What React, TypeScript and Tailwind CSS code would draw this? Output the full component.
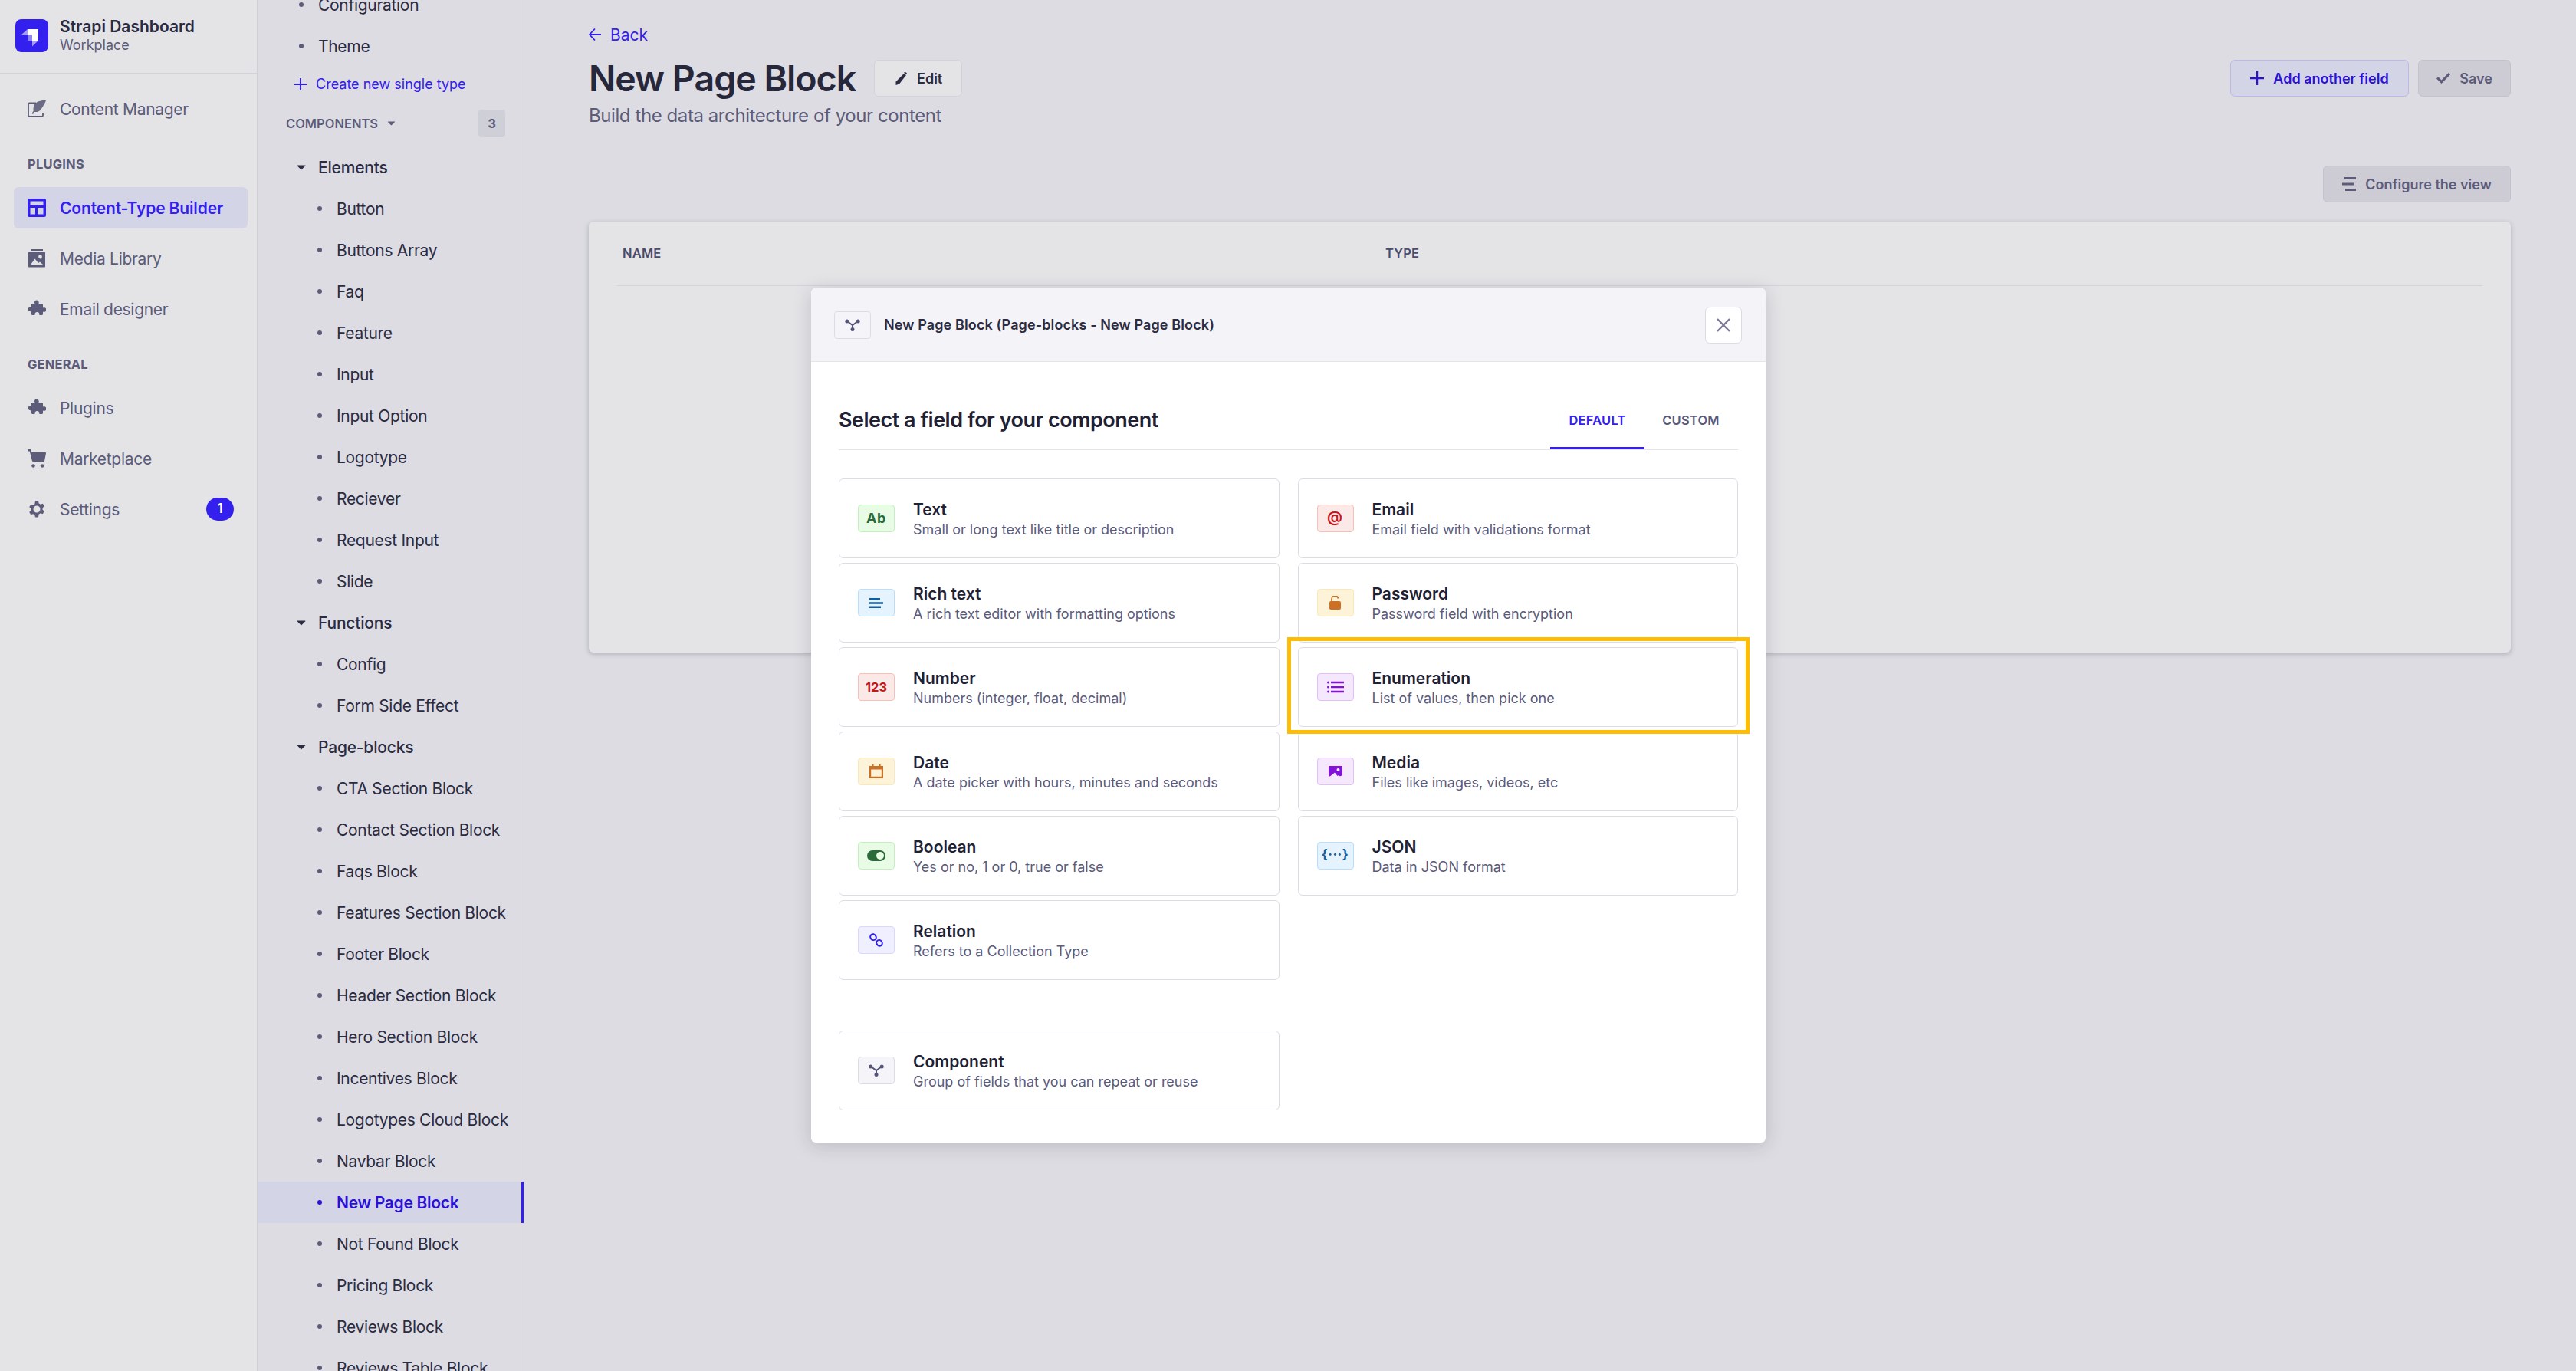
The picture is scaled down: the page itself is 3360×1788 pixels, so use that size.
import type { ReactNode } from 'react';

const FONT = { fontFamily: 'Inter, "Liberation Sans", sans-serif' };

const BLUE = '#3420ee';

function Puzzle({ className = '' }: { className?: string }) {
  return (
    <svg viewBox="0 0 24 24" className={className} fill="currentColor">
      <path d="M9 2.500a3 3 0 0 1 5.800.9c0 .7-.3 1.300-.6 1.800h4.600c.7 0 1.200.5 1.200 1.200v4a3 3 0 1 1 0 5.200v3.200c0 .7-.5 1.200-1.200 1.200h-3.600a3 3 0 1 0-5.600 0H6.200c-.7 0-1.200-.5-1.200-1.200v-3.900a3 3 0 1 1 0-5.400V6.400c0-.7.5-1.200 1.200-1.200h3.400c-.4-.7-.7-1.600-.6-2.700Z" />
    </svg>
  );
}

function NavIcon({ name }: { name: string }) {
  const cls = 'w-6 h-6 shrink-0';
  switch (name) {
    case 'feather':
      return (
        <svg viewBox="0 0 24 24" className={cls} fill="none">
          <path d="M11 4.500H2.500a1.500 1.500 0 0 0-1.500 1.500v14.500a1.500 1.500 0 0 0 1.500 1.500h16a1.500 1.500 0 0 0 1.500-1.500V17" stroke="currentColor" strokeWidth="1.800" />
          <path d="M24 1c-7-.5-13.500 1.500-15.500 6.500-1 2.600-1.200 5-.8 7l-2.200 3.500 1.500 1 2-3c3 .5 6.500-.5 8.500-3.500 2.500-3.500 4.500-6.500 6.500-11.500Z" fill="currentColor" opacity="0.9" />
        </svg>
      );
    case 'layout':
      return (
        <svg viewBox="0 0 24 24" className={cls} fill="currentColor">
          <path fillRule="evenodd" d="M0 2c0-1.100.9-2 2-2h20c1.100 0 2 .9 2 2v20c0 1.100-.9 2-2 2H2c-1.100 0-2-.9-2-2V2Zm3.500 1.500V8.500h17v-5h-17Zm0 8.500v8.500h6.500V12H3.500Zm9.500 0v8.500h7.500V12H13Z" />
        </svg>
      );
    case 'media':
      return (
        <svg viewBox="0 0 24 24" className={cls} fill="currentColor">
          <path d="M4 0h16v2H4zM2 3.500h20c.6 0 1 .4 1 1v18c0 .6-.4 1-1 1H2c-.6 0-1-.4-1-1v-18c0-.6.4-1 1-1Z" />
          <circle cx="16.500" cy="10" r="2.400" fill="#e4e4e7" />
          <path d="M4 20 9.500 12.500l4.500 5.500 2-1.500 4 3.500v.5H4Z" fill="#e4e4e7" />
        </svg>
      );
    case 'puzzle':
      return <Puzzle className={cls} />;
    case 'cart':
      return (
        <svg viewBox="0 0 24 24" className={cls} fill="currentColor">
          <path d="M0 0h3.500c.6 0 1 .4 1.200 1l.7 3H23c.7 0 1.100.6 1 1.200l-2 10c-.1.500-.5.800-1 .8H7c-.5 0-1-.4-1.100-.9L2.700 2.500H0V0Z" />
          <circle cx="7.500" cy="21.500" r="2.300" />
          <circle cx="19" cy="21.500" r="2.300" />
        </svg>
      );
    default:
      return (
        <svg viewBox="0 0 24 24" className={cls} fill="currentColor">
          <path fillRule="evenodd" d="M10 .5h4l.7 3.100c.8.300 1.500.6 2.100 1.100l3-1 2 3.500-2.300 2.100a8 8 0 0 1 0 2.400l2.300 2.100-2 3.500-3-1c-.6.500-1.300.8-2.100 1.100L14 21.500h-4l-.7-3.100c-.8-.3-1.500-.6-2.100-1.100l-3 1-2-3.500 2.300-2.100a8 8 0 0 1 0-2.400L2.200 8.200l2-3.500 3 1c.6-.5 1.300-.8 2.100-1.100L10 .5ZM12 15.500a4.500 4.500 0 1 0 0-9 4.500 4.500 0 0 0 0 9Z" transform="translate(0 1)" />
        </svg>
      );
  }
}

function NavItem({ icon, label, active, badge }: { icon: string; label: string; active?: boolean; badge?: string }) {
  return (
    <div
      className={[
        'h-[54px] flex items-center pl-[18px] pr-[18px] gap-[18px] rounded-md',
        active ? 'bg-[#d4d4e7] text-[#3420ee] font-semibold' : 'text-[#5c5c7a]',
      ].join(' ')}
    >
      <NavIcon name={icon} />
      <span className={['text-[21px] leading-none flex-1 whitespace-nowrap', active ? 'tracking-[-0.15px]' : 'tracking-[-0.3px]'].join(' ')}>{label}</span>
      {badge && (
        <span className="w-9 h-[30px] rounded-full bg-[#3420ee] text-white text-[17px] font-semibold flex items-center justify-center">
          {badge}
        </span>
      )}
    </div>
  );
}

function Caret({ className = '' }: { className?: string }) {
  return (
    <svg viewBox="0 0 12 7" className={className} fill="currentColor">
      <path d="M1 .5h10c.4 0 .6.500.3.800L6.300 6.200c-.2.200-.5.200-.7 0L.7 1.300C.4 1 .6.500 1 .5Z" />
    </svg>
  );
}

function Leaf({ label, active }: { label: string; active?: boolean }) {
  return (
    <div
      className={[
        'h-[54px] flex items-center pl-[78px]',
        active ? 'bg-[#d4d4e7] text-[#2a10d8] font-semibold border-r-[3px] border-[#3420ee]' : 'text-[#2b2b42]',
      ].join(' ')}
    >
      <span className={['w-[6px] h-[6px] rounded-full mr-[19px] shrink-0', active ? 'bg-[#2a10d8]' : 'bg-[#5c5c7a]'].join(' ')} />
      <span className={['text-[21px] leading-none whitespace-nowrap', active ? 'tracking-[-0.3px]' : 'tracking-[-0.3px]'].join(' ')}>{label}</span>
    </div>
  );
}

function Group({ label }: { label: string }) {
  return (
    <div className="h-[54px] flex items-center pl-[51px] text-[#2b2b42]">
      <Caret className="w-3 h-[7px] mr-[16px] shrink-0" />
      <span className="text-[21px] leading-none font-medium tracking-[-0.2px]">{label}</span>
    </div>
  );
}

const ELEMENTS = ['Button', 'Buttons Array', 'Faq', 'Feature', 'Input', 'Input Option', 'Logotype', 'Reciever', 'Request Input', 'Slide'];
const FUNCTIONS = ['Config', 'Form Side Effect'];
const PAGE_BLOCKS = [
  'CTA Section Block',
  'Contact Section Block',
  'Faqs Block',
  'Features Section Block',
  'Footer Block',
  'Header Section Block',
  'Hero Section Block',
  'Incentives Block',
  'Logotypes Cloud Block',
  'Navbar Block',
  'New Page Block',
  'Not Found Block',
  'Pricing Block',
  'Reviews Block',
  'Reviews Table Block',
];

function ComponentIcon() {
  return (
    <svg viewBox="0 0 20 16" className="w-5 h-4" fill="none" stroke="currentColor" strokeWidth="2">
      <path d="M3 3 10 8l7-5M10 8v6" />
      <circle cx="2.800" cy="3" r="2.500" fill="currentColor" stroke="none" />
      <circle cx="17.200" cy="3" r="2.500" fill="currentColor" stroke="none" />
      <circle cx="10" cy="13.500" r="2.500" fill="currentColor" stroke="none" />
    </svg>
  );
}

type Tone = 'green' | 'blue' | 'red' | 'yellow' | 'purple' | 'indigo' | 'neutral';

const TONE_CLASS: Record<Tone, string> = {
  green: 'bg-[#e8fbe5] border-[#c4f0bf] text-[#2a6b39]',
  blue: 'bg-[#e5f3ff] border-[#b5dfff] text-[#125f9f]',
  red: 'bg-[#fbe9e7] border-[#f6bfb8] text-[#c81418]',
  yellow: 'bg-[#fdf3d9] border-[#fae8b8] text-[#cc7026]',
  purple: 'bg-[#f5e8fd] border-[#e2bff5] text-[#8312d8]',
  indigo: 'bg-[#efefff] border-[#d9d8ff] text-[#2f1eee]',
  neutral: 'bg-[#f5f5f9] border-[#dcdce4] text-[#55557a]',
};

function Tile({ tone, children }: { tone: Tone; children: ReactNode }) {
  return (
    <div className={['w-12 h-9 shrink-0 rounded-[4px] border-[1.5px] flex items-center justify-center', TONE_CLASS[tone]].join(' ')}>
      {children}
    </div>
  );
}

type Field = { title: string; desc: string; tone: Tone; icon: ReactNode };

const LEFT_FIELDS: Field[] = [
  {
    title: 'Text',
    desc: 'Small or long text like title or description',
    tone: 'green',
    icon: <span className="text-[18px] leading-none font-bold tracking-[0.5px]">Ab</span>,
  },
  {
    title: 'Rich text',
    desc: 'A rich text editor with formatting options',
    tone: 'blue',
    icon: (
      <svg viewBox="0 0 18 13" className="w-[18px] h-[13px]" fill="currentColor">
        <path d="M0 0h14v2.400H0zM0 5.300h18v2.400H0zM0 10.600h15v2.400H0z" />
      </svg>
    ),
  },
  {
    title: 'Number',
    desc: 'Numbers (integer, float, decimal)',
    tone: 'red',
    icon: <span className="text-[16.500px] leading-none font-bold">123</span>,
  },
  {
    title: 'Date',
    desc: 'A date picker with hours, minutes and seconds',
    tone: 'yellow',
    icon: (
      <svg viewBox="0 0 18 18" className="w-[18px] h-[18px]" fill="none" stroke="currentColor" strokeWidth="2.200">
        <path d="M1.100 3.100h15.800v13.800H1.100zM1.100 5.500h15.800M4.500 0v3M13.500 0v3" />
      </svg>
    ),
  },
  {
    title: 'Boolean',
    desc: 'Yes or no, 1 or 0, true or false',
    tone: 'green',
    icon: (
      <span className="w-6 h-[14px] rounded-full bg-[#2a6b39] flex items-center justify-end pr-[2px]">
        <span className="w-[10px] h-[10px] rounded-full bg-[#e8fbe5]" />
      </span>
    ),
  },
  {
    title: 'Relation',
    desc: 'Refers to a Collection Type',
    tone: 'indigo',
    icon: (
      <svg viewBox="0 0 18 18" className="w-[18px] h-[18px]" fill="none" stroke="currentColor" strokeWidth="2">
        <rect x="1.500" y="1.200" width="7" height="8" rx="3.500" transform="rotate(-35 5 5.200)" />
        <rect x="9.500" y="8.800" width="7" height="8" rx="3.500" transform="rotate(-35 13 12.800)" />
      </svg>
    ),
  },
];

const RIGHT_FIELDS: Field[] = [
  {
    title: 'Email',
    desc: 'Email field with validations format',
    tone: 'red',
    icon: <span className="text-[20px] leading-none font-semibold -mt-[4px] -ml-[1px]">@</span>,
  },
  {
    title: 'Password',
    desc: 'Password field with encryption',
    tone: 'yellow',
    icon: (
      <svg viewBox="0 0 15 18" className="w-[15px] h-[18px] -ml-[1px]" fill="none">
        <path d="M3 8V4.500a4.300 4.300 0 0 1 8.500-1" stroke="currentColor" strokeWidth="1.700" />
        <rect x="0" y="7" width="15" height="11" rx="2" fill="currentColor" />
      </svg>
    ),
  },
  {
    title: 'Enumeration',
    desc: 'List of values, then pick one',
    tone: 'purple',
    icon: (
      <svg viewBox="0 0 22 16" className="w-[22px] h-4" fill="currentColor">
        <circle cx="1.500" cy="2" r="1.500" />
        <circle cx="1.500" cy="8" r="1.500" />
        <circle cx="1.500" cy="14" r="1.500" />
        <path d="M5 .8h17v2.400H5zM5 6.800h17v2.400H5zM5 12.800h17v2.400H5z" />
      </svg>
    ),
  },
  {
    title: 'Media',
    desc: 'Files like images, videos, etc',
    tone: 'purple',
    icon: (
      <svg viewBox="0 0 18 14" className="w-[18px] h-[14px]" fill="currentColor">
        <path d="M1 0h16c.6 0 1 .4 1 1v13l-1.500-1.500-1.500 1-2-1.500-1.500 1L8 8.500 2.500 13 0 14V1c0-.6.4-1 1-1Z" />
        <circle cx="12.500" cy="5" r="2" fill="#f5e8fd" />
      </svg>
    ),
  },
  {
    title: 'JSON',
    desc: 'Data in JSON format',
    tone: 'blue',
    icon: <span className="text-[17px] leading-none font-bold tracking-[0.5px] -mt-[3px] whitespace-nowrap">{'{···}'}</span>,
  },
];

function FieldCard({ field }: { field: Field }) {
  return (
    <div className="h-[104px] rounded-[6px] border-[1.5px] border-[#dcdce4] flex items-center pl-[24px] gap-[24px] bg-white">
      <Tile tone={field.tone}>{field.icon}</Tile>
      <div className="flex flex-col gap-[5px] pt-[2px]">
        <span className="text-[21px] leading-[21px] font-semibold text-[#212134] whitespace-nowrap">{field.title}</span>
        <span className="text-[18px] leading-[21px] text-[#5a5a7a] whitespace-nowrap">{field.desc}</span>
      </div>
    </div>
  );
}

function OutlineButton({ children, className = '' }: { children: ReactNode; className?: string }) {
  return (
    <button
      className={[
        'h-12 rounded-[6px] border-[1.5px] flex items-center justify-center gap-[12px] text-[18px] font-semibold',
        className,
      ].join(' ')}
    >
      {children}
    </button>
  );
}

export default function App() {
  return (
    <div className="relative w-full h-[1788px] overflow-hidden flex bg-[#dcdce2]" style={FONT}>
      {/* Main nav */}
      <aside className="w-[336px] shrink-0 bg-[#e4e4e7] border-r-[1.5px] border-[#cfcfd6] flex flex-col">
        <div className="h-[96px] shrink-0 border-b-[1.5px] border-[#d2d2d9] flex items-center pl-[20px] gap-[15px] pb-[3px]">
          <svg viewBox="0 0 43 43" className="w-[43px] h-[43px] shrink-0">
            <rect width="43" height="43" rx="8" fill={BLUE} />
            <path d="M16 13h14v15h-8v-7.500h-6Z" fill="#fff" />
            <path d="M7.500 20.500 16 13v7.500Z" fill="#a59bf7" />
            <path d="M16 20.500h6V28h-6Z" fill="#8f83f3" />
            <path d="M22 28h8l-8 7.500Z" fill="#a59bf7" />
          </svg>
          <div className="flex flex-col gap-[5px]">
            <span className="text-[21px] leading-[21px] font-semibold text-[#2b2b42] whitespace-nowrap">Strapi Dashboard</span>
            <span className="text-[18px] leading-[18px] text-[#5c5c7a]">Workplace</span>
          </div>
        </div>
        <nav className="pl-[18px] pr-[12px] flex flex-col gap-[12px] pt-[19px]">
          <NavItem icon="feather" label="Content Manager" />
          <div className="h-[18px] mt-[24px] pl-[18px] text-[16.500px] leading-[18px] font-bold text-[#5c5c7a] tracking-[0.2px]">PLUGINS</div>
          <div className="flex flex-col gap-[12px] mt-[9px]">
            <NavItem icon="layout" label="Content-Type Builder" active />
            <NavItem icon="media" label="Media Library" />
            <NavItem icon="puzzle" label="Email designer" />
          </div>
          <div className="h-[18px] mt-[24px] pl-[18px] text-[16.500px] leading-[18px] font-bold text-[#5c5c7a] tracking-[0.2px]">GENERAL</div>
          <div className="flex flex-col gap-[12px] mt-[9px]">
            <NavItem icon="puzzle" label="Plugins" />
            <NavItem icon="cart" label="Marketplace" />
            <NavItem icon="gear" label="Settings" badge="1" />
          </div>
        </nav>
      </aside>

      {/* Sub nav: scrolled, so the first row is cut by the top of the page */}
      <aside className="w-[348px] shrink-0 overflow-hidden border-r-[1.5px] border-[#c8c8d0] -mt-[21px] h-[1809px]">
        <div className="h-[54px] flex items-center pl-[54px] text-[#2b2b42]">
          <span className="w-[6px] h-[6px] rounded-full bg-[#5c5c7a] mr-[19px]" />
          <span className="text-[21px] leading-none tracking-[-0.3px]">Configuration</span>
        </div>
        <div className="h-[54px] flex items-center pl-[54px] text-[#2b2b42]">
          <span className="w-[6px] h-[6px] rounded-full bg-[#5c5c7a] mr-[19px]" />
          <span className="text-[21px] leading-none tracking-[-0.3px]">Theme</span>
        </div>
        <div className="h-[46px] flex items-center pl-[48px] text-[#3420ee]">
          <svg viewBox="0 0 16 16" className="w-4 h-4 mr-[12px] shrink-0" fill="currentColor">
            <path d="M7 0h2v7h7v2H9v7H7V9H0V7h7z" />
          </svg>
          <span className="text-[18px] leading-none whitespace-nowrap">Create new single type</span>
        </div>
        <div className="h-[58px] pb-[2px] flex items-center pl-[37px] pr-[24px]">
          <span className="text-[16.500px] leading-none font-semibold text-[#5c5c7a]">COMPONENTS</span>
          <Caret className="w-[11px] h-[6px] ml-[12px] text-[#5c5c7a]" />
          <span className="ml-auto w-[35px] h-9 rounded-[4px] bg-[#cfcfd7] flex items-center justify-center text-[16.500px] font-bold text-[#5c5c7a]">3</span>
        </div>
        <Group label="Elements" />
        {ELEMENTS.map((label) => (
          <Leaf key={label} label={label} />
        ))}
        <Group label="Functions" />
        {FUNCTIONS.map((label) => (
          <Leaf key={label} label={label} />
        ))}
        <Group label="Page-blocks" />
        {PAGE_BLOCKS.map((label) => (
          <Leaf key={label} label={label} active={label === 'New Page Block'} />
        ))}
      </aside>

      {/* Main content */}
      <main className="flex-1 min-w-0 pl-[84px] pr-[85px] pt-[33px]">
        <div className="h-[24px] flex items-center gap-[12px] text-[#3420ee]">
          <svg viewBox="0 0 16 18" className="w-4 h-[18px]" fill="none" stroke="currentColor" strokeWidth="1.800">
            <path d="M16 9H1.500M8 1.500 1 9l7 7.500" />
          </svg>
          <span className="text-[21px] leading-none">Back</span>
        </div>
        <div className="flex items-start justify-between mt-[21px]">
          <div>
            <div className="flex items-center gap-[24px] h-12">
              <h1 className="text-[46.500px] leading-none font-semibold tracking-[-1px] text-[#27273c] whitespace-nowrap">New Page Block</h1>
              <OutlineButton className="w-[115px] bg-[#e4e4e7] border-[#d2d2d9] text-[#2b2b42]">
                <svg viewBox="0 0 18 18" className="w-[18px] h-[18px]" fill="currentColor">
                  <path d="M13 3 16 5 7 16.500 2.500 18 2.500 13.500ZM14.500 0.500l2.500 2-1 1.500-3-2Z" />
                </svg>
                <span>Edit</span>
              </OutlineButton>
            </div>
            <p className="text-[24px] leading-[24px] tracking-[-0.42px] text-[#5c5c7a] mt-[13px] whitespace-nowrap">Build the data architecture of your content</p>
          </div>
          <div className="flex gap-[12px]">
            <OutlineButton className="w-[233px] bg-[#d4d4e7] border-[#bdb8ea] text-[#2a10d8]">
              <svg viewBox="0 0 18 18" className="w-[18px] h-[18px]" fill="currentColor">
                <path d="M8 0h2.200v8H18v2.200h-7.800V18H8v-7.800H0V8h8z" />
              </svg>
              <span>Add another field</span>
            </OutlineButton>
            <OutlineButton className="w-[121px] bg-[#cdcbd4] border-[#c3c2cc] text-[#5c5c7a]">
              <svg viewBox="0 0 18 14" className="w-[18px] h-[14px]" fill="currentColor">
                <path d="M6.500 14 0 7.500l2.300-2.300 4.200 4.200L15.700 0 18 2.300Z" />
              </svg>
              <span>Save</span>
            </OutlineButton>
          </div>
        </div>
        <div className="flex justify-end mt-[53px]">
          <OutlineButton className="w-[245px] bg-[#cdcbd4] border-[#c3c2cc] text-[#5c5c7a]">
            <svg viewBox="0 0 18 18" className="w-[18px] h-[18px]" fill="currentColor">
              <path d="M3 0h15v3H3zM0 7.500h15v3H0zM4 15h14v3H4z" />
            </svg>
            <span>Configure the view</span>
          </OutlineButton>
        </div>
        <section className="mt-[25px] h-[562px] rounded-[6px] bg-[#e4e4e7] shadow-[0_2px_6px_rgba(50,50,77,0.28)] px-[37px]">
          <div className="h-[84px] border-b-[1.5px] border-[#d2d2d9] flex items-center text-[16.500px] font-semibold text-[#4a4a6a] tracking-[0.2px]">
            <span className="pl-[7px] w-[1002px]">NAME</span>
            <span>TYPE</span>
          </div>
        </section>
      </main>

      {/* Field picker modal */}
      <div className="absolute left-[1058px] top-[376px] w-[1245px] h-[1114px] rounded-[6px] overflow-hidden bg-white shadow-[0_4px_24px_rgba(33,33,52,0.18)]">
        <div className="h-[96px] bg-[#f3f3f8] border-b-[1.5px] border-[#e4e4ea] flex items-center pl-[30px] pr-[31px]">
          <Tile tone="neutral">
            <ComponentIcon />
          </Tile>
          <span className="ml-[17px] text-[18px] leading-none font-semibold tracking-[0.12px] text-[#2b2b42] whitespace-nowrap">
            New Page Block (Page-blocks - New Page Block)
          </span>
          <button className="ml-auto w-12 h-12 rounded-[6px] border-[1.5px] border-[#dcdce4] bg-white flex items-center justify-center text-[#7b7b98]">
            <svg viewBox="0 0 18 18" className="w-[18px] h-[18px]" fill="none" stroke="currentColor" strokeWidth="2.400">
              <path d="m1 1 16 16M17 1 1 17" />
            </svg>
          </button>
        </div>
        <div className="px-[36px]">
          <div className="h-[115px] border-b-[1.5px] border-[#e4e4ea] flex items-end">
            <h2 className="text-[27px] leading-none font-semibold tracking-[-0.5px] text-[#212134] pb-[25px] whitespace-nowrap">
              Select a field for your component
            </h2>
            <div className="ml-auto mr-[1px] flex text-[16.500px] font-semibold tracking-[0.2px]">
              <span className="w-[123px] h-[56px] flex items-start justify-center pt-[6px] text-[#3420ee] border-b-[3px] border-[#3420ee]">DEFAULT</span>
              <span className="w-[121px] h-[56px] flex items-start justify-center pt-[6px] text-[#5a5a7a]">CUSTOM</span>
            </div>
          </div>
          <div className="mt-[37px] grid grid-cols-2 gap-x-[24px] items-start">
            <div className="flex flex-col gap-[6px]">
              {LEFT_FIELDS.map((f) => (
                <FieldCard key={f.title} field={f} />
              ))}
            </div>
            <div className="flex flex-col gap-[6px]">
              {RIGHT_FIELDS.map((f) => (
                <FieldCard key={f.title} field={f} />
              ))}
            </div>
          </div>
          <div className="mt-[66px] grid grid-cols-2 gap-x-[24px]">
            <FieldCard
              field={{
                title: 'Component',
                desc: 'Group of fields that you can repeat or reuse',
                tone: 'neutral',
                icon: <ComponentIcon />,
              }}
            />
          </div>
        </div>
      </div>

      {/* Tutorial highlight */}
      <div className="absolute left-[1679px] top-[831px] w-[603px] h-[126px] border-[5px] border-[#ffbc05] pointer-events-none" />
    </div>
  );
}
